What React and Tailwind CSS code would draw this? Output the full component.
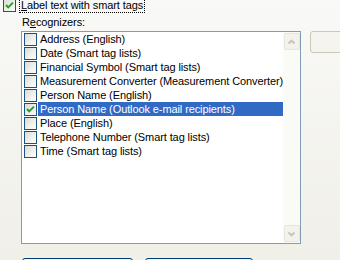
import React from 'react';

const recognizers = [
  { label: 'Address (English)', checked: false },
  { label: 'Date (Smart tag lists)', checked: false },
  { label: 'Financial Symbol (Smart tag lists)', checked: false },
  { label: 'Measurement Converter (Measurement Converter)', checked: false },
  { label: 'Person Name (English)', checked: false },
  { label: 'Person Name (Outlook e-mail recipients)', checked: true, selected: true },
  { label: 'Place (English)', checked: false },
  { label: 'Telephone Number (Smart tag lists)', checked: false },
  { label: 'Time (Smart tag lists)', checked: false },
];

const CheckBox = ({ checked }) => (
  <div className="w-[13px] h-[13px] shrink-0 border border-[#1c5180] bg-gradient-to-br from-[#dcdcd5] to-white">
    {checked && (
      <svg width="11" height="11" viewBox="0 0 11 11" className="block">
        <path d="M2 5 L4.2 7.4 L9 2.6" stroke="#21a121" strokeWidth="2" fill="none" />
      </svg>
    )}
  </div>
);

const ScrollArrow = ({ up }) => (
  <div className="w-[16px] h-[17px] rounded-[2px] border border-[#e8e6dc] bg-[#f3f2eb] flex items-center justify-center">
    <svg width="9" height="6" viewBox="0 0 9 6">
      <path d={up ? 'M1.5 4.5 L4.5 1.5 L7.5 4.5' : 'M1.5 1.5 L4.5 4.5 L7.5 1.5'} stroke="#c6c4b8" strokeWidth="1.8" fill="none" />
    </svg>
  </div>
);

const App = () => {
  return (
    <div className="w-[340px] h-[260px] overflow-hidden bg-gradient-to-b from-[#f9f9f7] to-[#f0efe8] text-[11px] leading-[13px] tracking-[-0.1px] text-black font-['Liberation_Sans',Arial,sans-serif]">
      {/* Smart tags option */}
      <div className="flex items-center ml-[3px] mt-[-2px]">
        <CheckBox checked />
        <span className="ml-[3px] pl-[1px] pr-[1px] border border-dotted border-black">
          <span className="underline">L</span>abel text with smart tags
        </span>
      </div>

      <div className="ml-[22px] mt-[3px]">
        R<span className="underline">e</span>cognizers:
      </div>

      <div className="flex items-start mt-[2px]">
        {/* Recognizer list */}
        <div className="ml-[21px] w-[303px] h-[213px] border border-[#7f9db9] bg-white flex">
          <div className="flex-1">
            {recognizers.map((r) => (
              <div key={r.label} className="flex h-[14px]">
                <div className="pl-[2px] pt-[1px]">
                  <CheckBox checked={r.checked} />
                </div>
                <div
                  className={`flex-1 ml-[1px] pl-[2px] leading-[14px] whitespace-nowrap ${
                    r.selected ? 'bg-[#316ac5] text-white' : ''
                  }`}
                >
                  {r.label}
                </div>
              </div>
            ))}
          </div>
          <div className="w-[17px] bg-[#fafaf6] flex flex-col justify-between items-center pt-[1px] pb-[1px]">
            <ScrollArrow up />
            <ScrollArrow />
          </div>
        </div>

        {/* Side button */}
        <div className="ml-[9px] w-[75px] h-[22px] shrink-0 rounded-[3px] border border-[#cac8bb] bg-[#f5f4ee]" />
      </div>

      {/* Bottom buttons */}
      <div className="flex ml-[22px] mt-[14px] gap-[12px]">
        <div className="w-[111px] h-[23px] rounded-[3px] border border-[#003c74] bg-[#f4f3ee]" />
        <div className="w-[108px] h-[23px] rounded-[3px] border border-[#003c74] bg-[#f4f3ee]" />
      </div>
    </div>
  );
};

export default App;
